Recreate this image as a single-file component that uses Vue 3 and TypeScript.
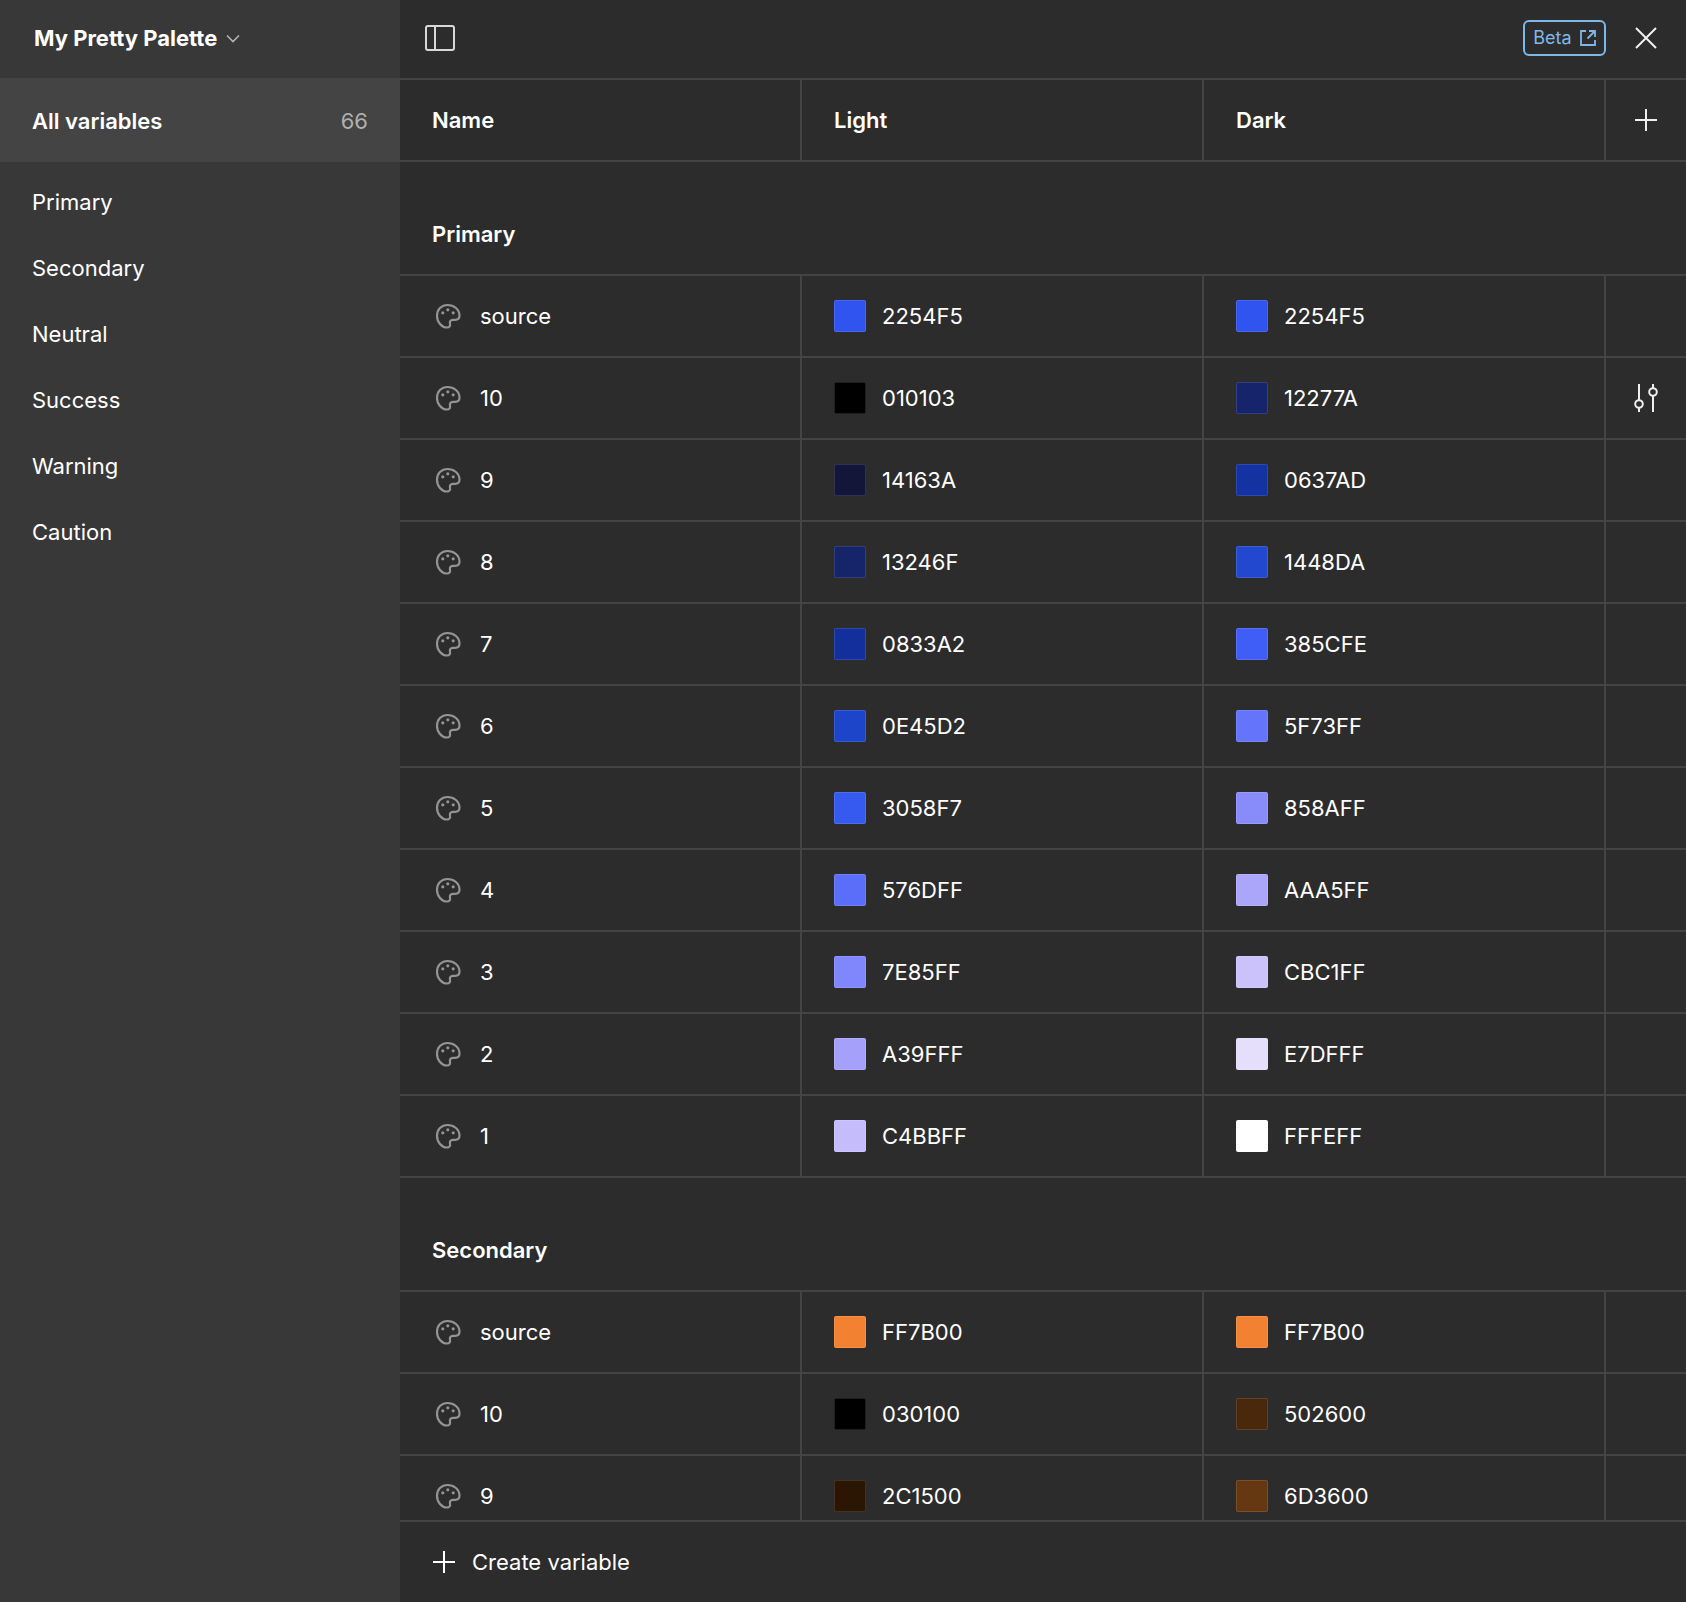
<script setup lang="ts">
interface Swatch { hex: string; color: string }
interface Row { name: string; light: Swatch; dark: Swatch; tune?: boolean }
interface Section { title: string; rows: Row[] }

const nav: string[] = ['Primary', 'Secondary', 'Neutral', 'Success', 'Warning', 'Caution']
const s = (hex: string, color: string): Swatch => ({ hex, color })

const sections: Section[] = [
  {
    title: 'Primary',
    rows: [
      { name: 'source', light: s('2254F5', '#3054f0'), dark: s('2254F5', '#3054f0') },
      { name: '10', light: s('010103', '#000000'), dark: s('12277A', '#16246c'), tune: true },
      { name: '9', light: s('14163A', '#13163a'), dark: s('0637AD', '#1233a1') },
      { name: '8', light: s('13246F', '#16246a'), dark: s('1448DA', '#2148cf') },
      { name: '7', light: s('0833A2', '#132f9c'), dark: s('385CFE', '#3f5ef8') },
      { name: '6', light: s('0E45D2', '#1d45c9'), dark: s('5F73FF', '#6474fb') },
      { name: '5', light: s('3058F7', '#3659f0'), dark: s('858AFF', '#888cfb') },
      { name: '4', light: s('576DFF', '#5a6efa'), dark: s('AAA5FF', '#aca6fb') },
      { name: '3', light: s('7E85FF', '#8086fb'), dark: s('CBC1FF', '#cbc2fc') },
      { name: '2', light: s('A39FFF', '#a5a0fa'), dark: s('E7DFFF', '#e6dffc') },
      { name: '1', light: s('C4BBFF', '#c5bdfb'), dark: s('FFFEFF', '#ffffff') }
    ]
  },
  {
    title: 'Secondary',
    rows: [
      { name: 'source', light: s('FF7B00', '#f28232'), dark: s('FF7B00', '#f28232') },
      { name: '10', light: s('030100', '#000000'), dark: s('502600', '#4a280c') },
      { name: '9', light: s('2C1500', '#2a1602'), dark: s('6D3600', '#653811') }
    ]
  }
]
</script>

<template>
  <div class="app">
    <aside class="sidebar">
      <div class="brand">
        <span>My Pretty Palette</span>
        <svg class="chev" width="14" height="9" viewBox="0 0 14 9" fill="none">
          <path d="M1 1.5l6 6 6-6" stroke="#b4b4b4" stroke-width="1.6" />
        </svg>
      </div>
      <div class="all">
        <span>All variables</span>
        <span class="count">66</span>
      </div>
      <nav class="nav">
        <div v-for="item in nav" :key="item" class="nav-item">{{ item }}</div>
      </nav>
    </aside>

    <main class="main">
      <header class="topbar">
        <svg width="32" height="28" viewBox="0 0 32 28" fill="none">
          <rect x="2" y="2" width="28" height="24" rx="2" stroke="#d8d8d8" stroke-width="2" />
          <path d="M11 2v24" stroke="#d8d8d8" stroke-width="2" />
        </svg>
        <div class="top-right">
          <div class="beta">
            <span>Beta</span>
            <svg width="16" height="16" viewBox="0 0 16 16" fill="none">
              <path d="M6 1H1v14h14v-5M9 1h6v6M15 1L7.5 8.5" stroke="#7db8eb" stroke-width="1.8" />
            </svg>
          </div>
          <svg width="24" height="24" viewBox="0 0 24 24" fill="none">
            <path d="M2 2l20 20M22 2L2 22" stroke="#f0f0f0" stroke-width="2" />
          </svg>
        </div>
      </header>

      <div class="row head">
        <div class="cell">Name</div>
        <div class="cell">Light</div>
        <div class="cell">Dark</div>
        <div class="cell last">
          <svg width="24" height="24" viewBox="0 0 24 24" fill="none">
            <path d="M12 1v22M1 12h22" stroke="#f0f0f0" stroke-width="2" />
          </svg>
        </div>
      </div>

      <div class="scroller">
        <section v-for="sec in sections" :key="sec.title">
          <div class="sec-title">{{ sec.title }}</div>
          <div v-for="row in sec.rows" :key="row.name" class="row">
            <div class="cell name">
              <svg class="pal" width="26" height="26" viewBox="0 0 26 26" fill="none">
                <path
                  d="M12.5 2C6.4 2 2 6.6 2 12.8 2 19 6.6 24.5 12 24.5c2.6 0 3.4-1.6 3-3.6-.5-2.4.6-4 2.8-4h2.4c2.800 0 4.300-1.600 4.300-4.300C24.500 6.500 19 2 12.500 2z"
                  stroke="#949494"
                  stroke-width="2.200"
                />
                <circle cx="7.800" cy="9.800" r="1.600" fill="#949494" />
                <circle cx="12.800" cy="6.800" r="1.600" fill="#949494" />
                <circle cx="18.200" cy="9.800" r="1.600" fill="#949494" />
              </svg>
              <span>{{ row.name }}</span>
            </div>
            <div class="cell val">
              <i class="swatch" :style="{ background: row.light.color }"></i>
              <span>{{ row.light.hex }}</span>
            </div>
            <div class="cell val">
              <i class="swatch" :style="{ background: row.dark.color }"></i>
              <span>{{ row.dark.hex }}</span>
            </div>
            <div class="cell last">
              <svg v-if="row.tune" width="24" height="30" viewBox="0 0 24 30" fill="none">
                <path d="M5 1v17M5 25v4M19 1v4M19 12v17" stroke="#efefef" stroke-width="2" />
                <circle cx="5" cy="21" r="3.800" stroke="#efefef" stroke-width="2" />
                <circle cx="19" cy="9" r="3.800" stroke="#efefef" stroke-width="2" />
              </svg>
            </div>
          </div>
        </section>
      </div>

      <footer class="footer">
        <svg width="24" height="24" viewBox="0 0 24 24" fill="none">
          <path d="M12 1v22M1 12h22" stroke="#ffffff" stroke-width="2" />
        </svg>
        <span>Create variable</span>
      </footer>
    </main>
  </div>
</template>

<style scoped>
.app {
  display: flex;
  width: 1686px;
  height: 1602px;
  overflow: hidden;
  background: #2c2c2c;
  color: #fff;
  font-family: Inter, "Liberation Sans", sans-serif;
  font-size: 22px;
}
.sidebar {
  width: 400px;
  flex: none;
  background: #383838;
}
.brand {
  height: 78px;
  box-sizing: border-box;
  padding: 0 0 2px 34px;
  display: flex;
  align-items: center;
  gap: 9px;
  font-weight: 700;
}
.chev {
  margin-top: 1px;
}
.all {
  height: 84px;
  box-sizing: border-box;
  padding: 2px 32px 0;
  display: flex;
  align-items: center;
  justify-content: space-between;
  background: #444444;
  font-weight: 600;
}
.count {
  font-weight: 400;
  color: #b0b0b0;
}
.nav {
  padding-top: 7px;
}
.nav-item {
  height: 66px;
  padding-left: 32px;
  display: flex;
  align-items: center;
}
.main {
  flex: 1;
  min-width: 0;
  display: flex;
  flex-direction: column;
}
.topbar {
  height: 80px;
  flex: none;
  border-bottom: 2px solid #444;
  box-sizing: border-box;
  padding: 0 28px 2px 24px;
  display: flex;
  align-items: center;
  justify-content: space-between;
}
.top-right {
  display: flex;
  align-items: center;
  gap: 28px;
}
.beta {
  width: 83px;
  height: 36px;
  box-sizing: border-box;
  border: 2px solid #7db8eb;
  border-radius: 6px;
  display: flex;
  align-items: center;
  justify-content: center;
  gap: 8px;
  padding-bottom: 1px;
  color: #7db8eb;
  font-size: 18px;
}
.row {
  display: grid;
  grid-template-columns: 402px 402px 402px 80px;
  height: 82px;
  box-sizing: border-box;
  border-bottom: 2px solid #444;
}
.cell {
  display: flex;
  align-items: center;
  box-sizing: border-box;
  border-right: 2px solid #444;
  padding-left: 32px;
}
.cell.last {
  border-right: 0;
  padding: 0;
  justify-content: center;
}
.head {
  flex: none;
  font-weight: 600;
}
.scroller {
  flex: 1;
  min-height: 0;
  overflow: hidden;
}
.sec-title {
  height: 114px;
  box-sizing: border-box;
  padding: 32px 0 0 32px;
  border-bottom: 2px solid #444;
  display: flex;
  align-items: center;
  font-weight: 600;
}
.pal {
  margin-left: 3px;
  margin-right: 19px;
}
.swatch {
  width: 32px;
  height: 32px;
  flex: none;
  box-sizing: border-box;
  border: 1px solid rgba(255, 255, 255, 0.12);
  border-radius: 2px;
  background-clip: padding-box;
  margin-right: 16px;
}
.footer {
  height: 82px;
  flex: none;
  box-sizing: border-box;
  border-top: 2px solid #444;
  padding-left: 32px;
  display: flex;
  align-items: center;
  gap: 16px;
}
</style>

<style>
html, body {
  margin: 0;
  background: #2c2c2c;
}
</style>
